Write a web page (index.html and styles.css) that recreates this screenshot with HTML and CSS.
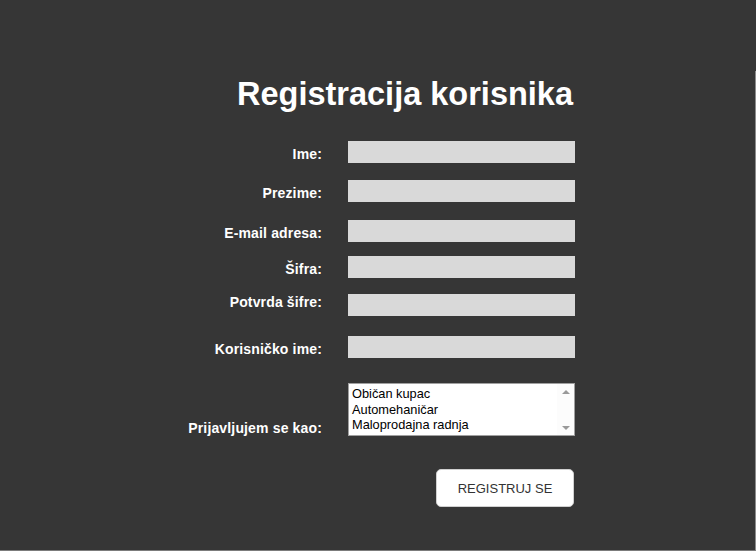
FILE: index.html
```html
<!DOCTYPE html>
<html lang="sr">
<head>
    <meta charset="UTF-8">
    <title>Registracija korisnika</title>
    <link rel="stylesheet" href="styles.css">
</head>
<body>
    <div class="page">
        <div class="inner">
            <h1 class="title">Registracija korisnika</h1>
            <form class="reg-form" id="regForm">
                <div class="row">
                    <label class="lbl" for="ime">Ime:</label>
                    <input class="field" type="text" id="ime">
                </div>
                <div class="row">
                    <label class="lbl" for="prezime">Prezime:</label>
                    <input class="field" type="text" id="prezime">
                </div>
                <div class="row">
                    <label class="lbl" for="email">E-mail adresa:</label>
                    <input class="field" type="email" id="email">
                </div>
                <div class="row">
                    <label class="lbl" for="sifra">Šifra:</label>
                    <input class="field" type="password" id="sifra">
                </div>
                <div class="row row-up">
                    <label class="lbl" for="sifra2">Potvrda šifre:</label>
                    <input class="field" type="password" id="sifra2">
                </div>
                <div class="row">
                    <label class="lbl" for="korisnik">Korisničko ime:</label>
                    <input class="field" type="text" id="korisnik">
                </div>
                <div class="row row-select">
                    <label class="lbl">Prijavljujem se kao:</label>
                    <div class="listbox" role="listbox">
                        <div class="options">
                            <div class="opt">Običan kupac</div>
                            <div class="opt">Automehaničar</div>
                            <div class="opt">Maloprodajna radnja</div>
                        </div>
                        <div class="scrollbar">
                            <span class="arrow arrow-up"></span>
                            <span class="arrow arrow-down"></span>
                        </div>
                    </div>
                </div>
                <div class="row row-submit">
                    <button type="button" class="btn">REGISTRUJ SE</button>
                </div>
            </form>
        </div>
    </div>
</body>
</html>
```

FILE: styles.css
```css
html, body {
    margin: 0;
    padding: 0;
}
body {
    background-color: #363636;
    font-family: 'Liberation Sans', Arial, sans-serif;
    color: #fff;
}
.page {
    margin-top: 71px;
    height: 479px;
    border-right: 1px solid #8c8c8c;
    border-bottom: 1px solid #7c7c7c;
}
.inner {
    width: 427px;
    margin-left: 148px;
    padding-top: 5px;
}
.title {
    margin: 0;
    padding-right: 2px;
    font-size: 32.5px;
    line-height: 36px;
    font-weight: bold;
    text-align: right;
    color: #fff;
}
.reg-form {
    margin-top: 29px;
}
.row {
    display: flex;
    align-items: center;
    gap: 26px;
    height: 22px;
    margin-bottom: 17px;
}
.row:nth-child(2) { margin-bottom: 18px; }
.row:nth-child(3) { margin-bottom: 14px; }
.row:nth-child(4) { margin-bottom: 16px; }
.row:nth-child(5) { margin-bottom: 20px; }
.row:nth-child(6) { margin-bottom: 25px; }
.lbl {
    width: 174px;
    flex-shrink: 0;
    text-align: right;
    font-size: 14px;
    line-height: 16px;
    font-weight: bold;
    letter-spacing: 0.15px;
    padding-top: 4px;
}
.row-up .lbl {
    padding-top: 0;
    padding-bottom: 6px;
}
.field {
    width: 227px;
    height: 22px;
    box-sizing: border-box;
    border: none;
    padding: 0 4px;
    background-color: #d9d9d9;
    font-size: 13px;
}
.row-select {
    height: 53px;
    align-items: flex-end;
    margin-bottom: 33px;
}
.row-select .lbl {
    padding-top: 0;
}
.listbox {
    width: 227px;
    height: 53px;
    box-sizing: border-box;
    border: 1px solid #a0a0a0;
    background: #fff;
    display: flex;
    color: #000;
}
.options {
    flex: 1;
    padding: 2px 0 0 3px;
    font-family: 'Liberation Sans', Arial, sans-serif;
    font-size: 12.8px;
    line-height: 15.5px;
}
.scrollbar {
    width: 17px;
    display: flex;
    flex-direction: column;
    justify-content: space-between;
    align-items: center;
    padding: 6px 0 5px;
    box-sizing: border-box;
    background: #fcfcfc;
}
.arrow {
    width: 0;
    height: 0;
    border-left: 4px solid transparent;
    border-right: 4px solid transparent;
}
.arrow-up {
    border-bottom: 4px solid #999;
}
.arrow-down {
    border-top: 4px solid #999;
}
.row-submit {
    justify-content: flex-end;
    height: 38px;
    margin-bottom: 0;
    padding-right: 1px;
}
.btn {
    width: 138px;
    height: 38px;
    background: #fff;
    border: 1px solid #d0d0d0;
    border-radius: 5px;
    color: #333;
    font-family: 'Liberation Sans', Arial, sans-serif;
    font-size: 13px;
    cursor: pointer;
}
.btn:hover {
    background: #f2f2f2;
}
```
